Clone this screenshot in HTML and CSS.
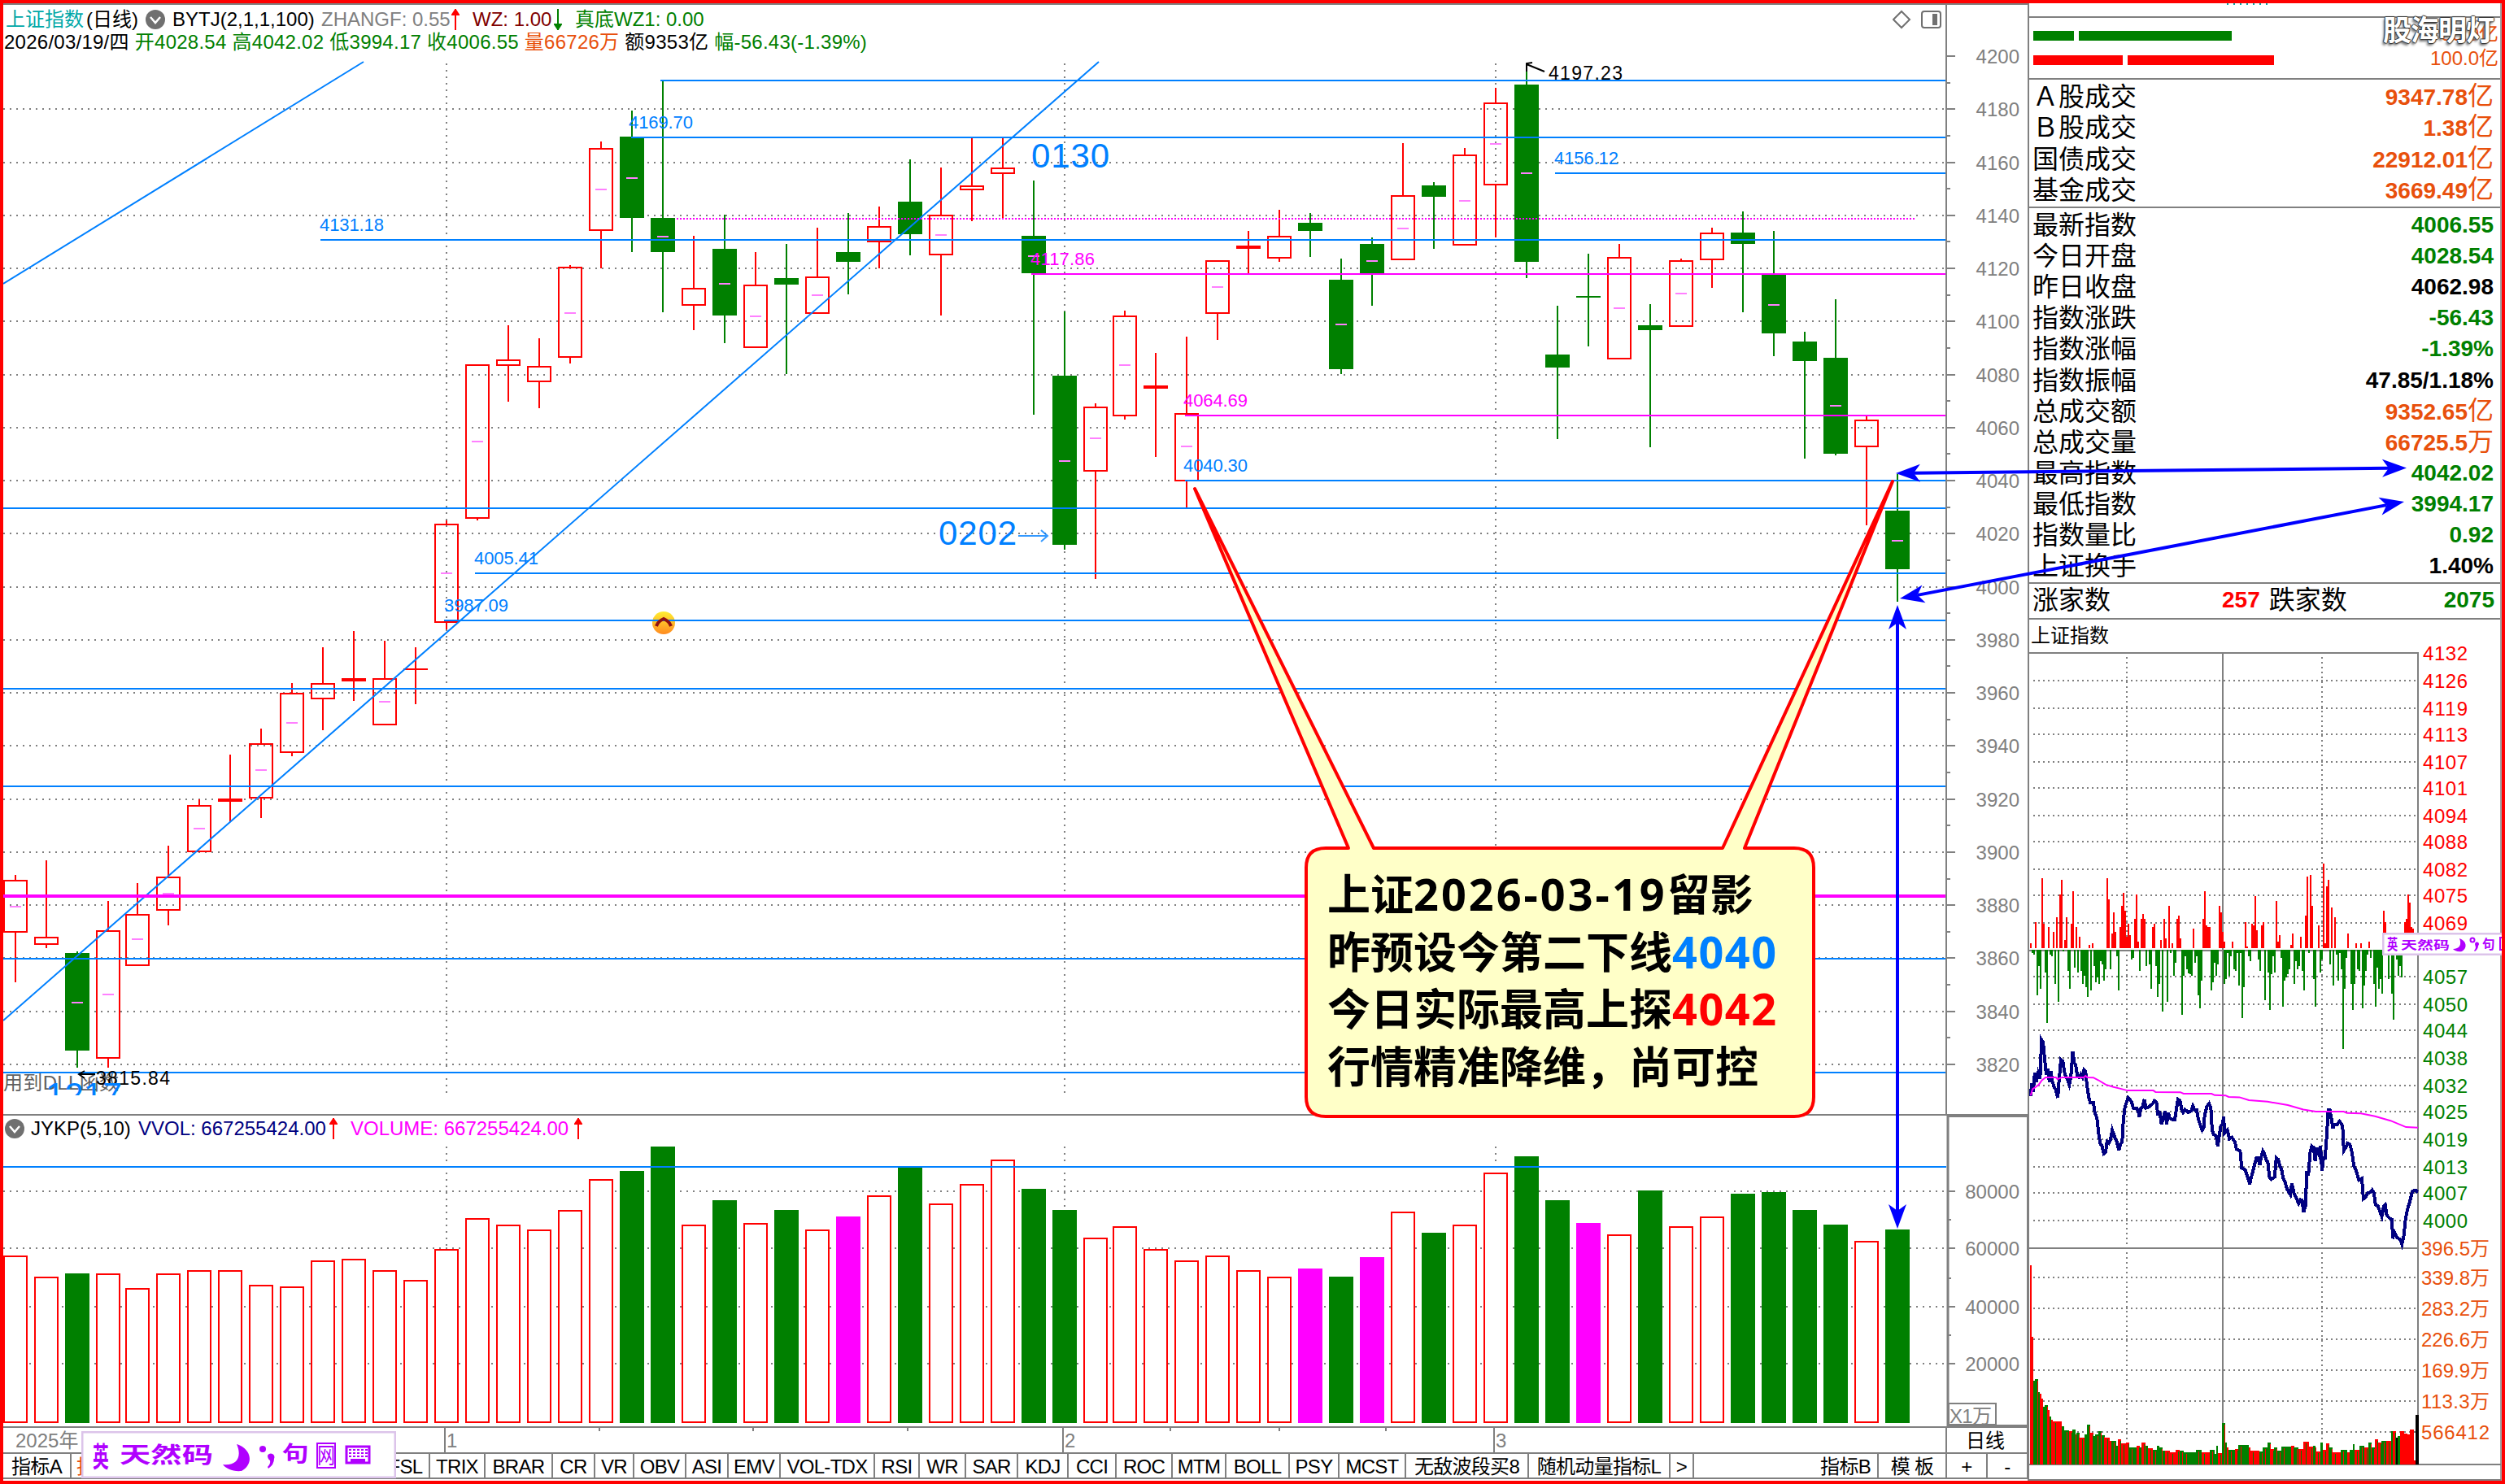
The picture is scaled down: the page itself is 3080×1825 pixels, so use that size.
FILE: index.html
```html
<!DOCTYPE html>
<html lang="zh-CN">
<head>
  <meta charset="UTF-8">
  <title>上证指数 日线</title>
  <link rel="stylesheet" href="styles.css">
</head>
<body>
  <div class="screen">

    <!-- K line area -->
    <div class="main">
      <div class="chart-head">
        <div class="head-row">
          <span class="cyan">上证指数</span><span class="period">(日线)</span>
          <svg class="drop" viewBox="0 0 24 24"><circle cx="12" cy="12" r="12"/><path d="M6 9l6 7 6-7"/></svg>
          <span class="ind-name">BYTJ(2,1,1,100)</span>
          <span class="grey zhangf">ZHANGF: 0.55</span>
          <svg class="flag up" viewBox="0 0 10 26"><path d="M5 0V26M1 7L5 1L9 7Z"/></svg>
          <span class="maroon wz">WZ: 1.00</span>
          <svg class="flag down" viewBox="0 0 10 26"><path d="M5 0V26M1 19L5 25L9 19Z"/></svg>
          <span class="green wz1">真底WZ1: 0.00</span>
          <svg class="tools" viewBox="0 0 60 24">
            <path d="M11 2L21 12L11 22L1 12Z"/>
            <rect x="36" y="2" width="23" height="20" rx="3"/>
            <rect class="solid" x="49" y="5" width="6" height="14"/>
          </svg>
        </div>
        <div class="head-row quote-row">
          <span>2026/03/19/四</span>
          <span class="green">开4028.54</span>
          <span class="green">高4042.02</span>
          <span class="green">低3994.17</span>
          <span class="green">收4006.55</span>
          <span class="orange">量66726万</span>
          <span>额9353亿</span>
          <span class="green">幅-56.43(-1.39%)</span>
        </div>
      </div>
      <svg class="price-chart" id="price" viewBox="4 72 2490 1299"></svg>
      <div class="vol-head">
        <svg class="drop" viewBox="0 0 24 24"><circle cx="12" cy="12" r="12"/><path d="M6 9l6 7 6-7"/></svg>
        <span class="vol-name">JYKP(5,10)</span>
        <span class="navy vvol">VVOL: 667255424.00</span>
        <svg class="flag up" viewBox="0 0 10 26"><path d="M5 0V26M1 7L5 1L9 7Z"/></svg>
        <span class="magenta volume">VOLUME: 667255424.00</span>
        <svg class="flag up" viewBox="0 0 10 26"><path d="M5 0V26M1 7L5 1L9 7Z"/></svg>
      </div>
      <svg class="vol-chart" id="volume" viewBox="4 1404 2490 383"></svg>
      <div class="tabs" id="tabs"></div>
    </div>

    <!-- Quote panel -->
    <div class="side">
      <div class="side-top"><i class="title-edge"></i></div>
      <div class="power">
        <div class="power-row">
          <i class="bar g" style="width:50px"></i><i class="bar g" style="width:188px"></i>
          <span class="orange">83.0亿</span>
        </div>
        <div class="power-row">
          <i class="bar r" style="width:110px"></i><i class="bar r" style="width:180px"></i>
          <span class="orange">100.0亿</span>
        </div>
      </div>
      <div class="quotes turnover">
        <div class="row"><span>Ａ股成交</span><b class="orange">9347.78<em>亿</em></b></div>
        <div class="row"><span>Ｂ股成交</span><b class="orange">1.38<em>亿</em></b></div>
        <div class="row"><span>国债成交</span><b class="orange">22912.01<em>亿</em></b></div>
        <div class="row"><span>基金成交</span><b class="orange">3669.49<em>亿</em></b></div>
      </div>
      <div class="quotes index">
        <div class="row"><span>最新指数</span><b class="green">4006.55</b></div>
        <div class="row"><span>今日开盘</span><b class="green">4028.54</b></div>
        <div class="row"><span>昨日收盘</span><b>4062.98</b></div>
        <div class="row"><span>指数涨跌</span><b class="green">-56.43</b></div>
        <div class="row"><span>指数涨幅</span><b class="green">-1.39%</b></div>
        <div class="row"><span>指数振幅</span><b>47.85/1.18%</b></div>
        <div class="row"><span>总成交额</span><b class="orange">9352.65<em>亿</em></b></div>
        <div class="row"><span>总成交量</span><b class="orange">66725.5<em>万</em></b></div>
        <div class="row"><span>最高指数</span><b class="green">4042.02</b></div>
        <div class="row"><span>最低指数</span><b class="green">3994.17</b></div>
        <div class="row"><span>指数量比</span><b class="green">0.92</b></div>
        <div class="row"><span>上证换手</span><b>1.40%</b></div>
      </div>
      <div class="updown">
        <span>涨家数</span><b class="red">257</b><span class="fall">跌家数</span><b class="green last">2075</b>
      </div>
      <div class="mini-title">上证指数</div>
      <svg class="mini" id="mini" viewBox="2495 803 581 1018"></svg>
    </div>

    <!-- Annotations drawn over the charts -->
    <svg class="overlay" viewBox="0 0 3080 1825" id="notes"></svg>
    <div class="note">
      <p>上证<i class="num date">2026-03-19</i>留影</p>
      <p>昨预设今第二下线<i class="num blue">4040</i></p>
      <p>今日实际最高上探<i class="num red">4042</i></p>
      <p>行情精准降维，尚可控</p>
    </div>
    <div class="watermark">股海明灯</div>

    <!-- Input method bars -->
    <svg class="ime" viewBox="0 0 387 58">
      <rect class="ime-box" x="1" y="1" width="385" height="56"/>
      <g id="ime-keys">
        <text class="ime-en" transform="translate(14 44) scale(.6 1.05)">英</text>
        <text class="ime-name" transform="translate(47 39) scale(1.42 1)">天然码</text>
        <path d="M191 16C210 22 212 41 197 49C186 50 178 46 174 41C191 43 198 32 191 16Z"/>
        <circle cx="223" cy="22" r="4"/>
        <path d="M229 30a4 4 0 1 1 8 4q0 7-7 12l-1-2q4-4 3-8q-3-2-3-6z"/>
        <text class="ime-ju" transform="translate(247 37) scale(1.05 .85)">句</text>
        <rect class="line" x="290" y="15" width="22" height="30"/>
        <text class="ime-net" transform="translate(290 40) scale(.82 1)">网</text>
        <rect class="line" x="326" y="19" width="28" height="20"/>
        <path class="dots" d="M329 23H352M329 27H352M329 31H352"/>
        <path d="M331 34h18v4h-18z"/>
      </g>
    </svg>
    <div class="ime-small">
      <svg viewBox="0 0 300 28" width="300" height="28">
        <rect class="ime-box" x="1" y="1" width="298" height="26"/>
        <text class="ime-en" transform="translate(6 21) scale(.4 .56)">英</text>
        <text class="ime-name" transform="translate(23 20) scale(.74 .5)">天然码</text>
        <path d="M95 7C104 10 105 19 98 23C93 24 89 22 87 20C95 20 98 15 95 7Z"/>
        <circle class="line" cx="111" cy="9" r="2.5"/>
        <path d="M114 14a2.500 2.500 0 1 1 4 2q0 4-4 7l-1-1q2-2 2-4z"/>
        <text class="ime-ju" transform="translate(123 20) scale(.5)">句</text>
        <rect class="line" x="145" y="6" width="16" height="15"/>
      </svg>
    </div>
  </div>
  <script src="charts.js"></script>
</body>
</html>
```

FILE: styles.css
```css
* {
  margin: 0;
  padding: 0;
  box-sizing: border-box;
}

body {
  width: 3080px;
  height: 1825px;
  background: #fff;
  color: #000;
  font-family: "Liberation Sans", "Noto Sans CJK SC", sans-serif;
  font-size: 24px;
  overflow: hidden;
}

.screen {
  position: relative;
  width: 3080px;
  height: 1825px;
  border: 4px solid #f00;
  display: grid;
  grid-template-columns: 2490px 582px;
  overflow: hidden;
}

.green { color: #008000; }
.red { color: #f00; }
.orange { color: #e8500c; }
.grey { color: #808080; }
.cyan { color: #00a8a8; }
.maroon { color: #800000; }
.navy { color: #000080; }
.magenta { color: #f0f; }
.blue { color: #0080ff; }

/* main column */
.main {
  display: flex;
  flex-direction: column;
  height: 1817px;
}

.chart-head {
  height: 68px;
  border-top: 2px solid #808080;
  padding-top: 4px;
}

.head-row {
  display: flex;
  align-items: center;
  height: 28px;
  line-height: 28px;
  white-space: nowrap;
  padding-left: 3px;
}

.quote-row {
  gap: 7px;
  padding-left: 1px;
  letter-spacing: 0.25px;
}

.period { margin-left: 3px; }
.drop { width: 24px; height: 24px; margin-left: 9px; }
.drop circle { fill: #707070; }
.drop path { fill: none; stroke: #fff; stroke-width: 2.5; }
.ind-name { width: 171px; margin-left: 9px; }
.zhangf { width: 156px; margin-left: 12px; }
.flag { width: 10px; height: 26px; margin-left: 4px; }
.flag path { stroke-width: 2; }
.flag.up path { stroke: #f00; fill: #f00; }
.flag.down path { stroke: #008000; fill: #008000; }
.wz { width: 96px; margin-left: 16px; }
.wz1 { margin-left: 16px; }

.tools { width: 60px; height: 24px; margin-left: auto; margin-right: 107px; }
.tools path, .tools rect { fill: none; stroke: #707070; stroke-width: 2; }
.tools .solid { fill: #707070; stroke: none; }

.price-chart {
  display: block;
  width: 2490px;
  height: 1299px;
  overflow: visible;
}

.vol-head {
  display: flex;
  align-items: center;
  height: 33px;
  line-height: 30px;
  white-space: nowrap;
}
.vol-head .drop { margin-left: 2px; }
.vol-name { width: 122px; margin-left: 8px; }
.vvol { width: 231px; margin-left: 10px; }
.volume { width: 271px; margin-left: 16px; }

.vol-chart {
  display: block;
  width: 2490px;
  height: 383px;
  overflow: visible;
}

svg text {
  font-family: "Liberation Sans", "Noto Sans CJK SC", sans-serif;
}

.tabs {
  display: flex;
  height: 33px;
  border-top: 2px solid #808080;
  border-bottom: 2px solid #808080;
  margin-top: -1px;
}

.tab {
  flex: none;
  height: 29px;
  line-height: 31px;
  text-align: center;
  white-space: nowrap;
  overflow: hidden;
  border-right: 2px solid #808080;
  letter-spacing: -0.7px;
}
.tab.right { text-align: right; padding-right: 8px; }
.tab.first { text-align: left; padding-left: 6px; }

/* side column */
.side {
  height: 1817px;
  border-left: 2px solid #808080;
  border-right: 2px solid #a0a0a0;
  margin-left: -1px;
  width: 583px;
}

.side-top {
  height: 18px;
  border-bottom: 2px solid #808080;
}

/* bottom edge of the scrolled-out title */
.title-edge {
  display: block;
  width: 50px;
  height: 2px;
  margin-left: 243px;
  background: repeating-linear-gradient(90deg, #00a8a8 0 2px, #fff 2px 8px);
}

.power {
  height: 76px;
  border-bottom: 2px solid #808080;
  padding: 7px 2px 0 5px;
}

.power-row {
  display: flex;
  align-items: center;
  gap: 6px;
  height: 30px;
}
.power-row span { margin-left: auto; line-height: 30px; padding-bottom: 5px; }
.bar { height: 12px; }
.bar.g { background: #008000; }
.bar.r { background: #f00; }

.quotes { border-bottom: 2px solid #808080; }
.turnover { height: 158px; padding-top: 2px; }
.index { height: 462px; padding-top: 2px; }

.row {
  display: flex;
  justify-content: space-between;
  align-items: center;
  height: 38px;
  line-height: 38px;
  padding: 0 8px 0 4px;
  font-size: 32px;
  white-space: nowrap;
}

.row b { font-size: 28px; }
.row em { font-size: 32px; font-style: normal; font-weight: 400; }
.turnover .row { height: 38.3px; }
.index .row { height: 38.1px; }

.updown {
  display: flex;
  align-items: center;
  height: 44px;
  line-height: 38px;
  border-bottom: 2px solid #808080;
  padding: 0 7px 3px 4px;
  font-size: 32px;
}
.updown b { font-size: 28px; }
.updown .red { margin-left: 137px; }
.updown .fall { margin-left: 11px; }
.updown .last { margin-left: auto; }

.mini-title {
  height: 41px;
  line-height: 40px;
  padding-left: 2px;
}

.mini {
  display: block;
  width: 581px;
  height: 1018px;
  overflow: visible;
}

/* things that lie over the charts */
.overlay {
  position: absolute;
  left: -4px;
  top: -4px;
  width: 3080px;
  height: 1825px;
}

.note {
  position: absolute;
  left: 1628px;
  top: 1058px;
  font: bold 53px/70px "Noto Sans CJK SC", sans-serif;
  white-space: nowrap;
}
.note p { height: 70.5px; }
.note .num {
  font-family: "Noto Sans", "Noto Sans CJK SC", sans-serif;
  font-style: normal;
  font-size: 54px;
  line-height: 1;
  letter-spacing: 1.5px;
}
.note .date { letter-spacing: 3px; }

.watermark {
  position: absolute;
  left: 2926px;
  top: 8px;
  font: bold 35px/46px "Noto Sans CJK SC", sans-serif;
  color: #fff;
  letter-spacing: -1px;
  text-shadow: -1px 0 1px #333, 1px 0 1px #333, 0 1px 1px #333, 0 -1px 1px #333, -2px 3px 3px #777;
}

.ime {
  position: absolute;
  left: 96px;
  top: 1756px;
  width: 387px;
  height: 58px;
}
.ime-small {
  position: absolute;
  left: 2925px;
  top: 1143px;
  width: 147px;
  height: 28px;
  overflow: hidden;
}
.ime, .ime-small svg { fill: #b000ff; }
.ime-box { fill: #fff; stroke: #dcc4ea; stroke-width: 3; }
.line { fill: none; stroke: #b000ff; stroke-width: 2; }
.dots { fill: none; stroke: #b000ff; stroke-width: 2; stroke-dasharray: 3 2; }
.ime-en { font-size: 33px; font-weight: bold; }
.ime-name { font-size: 27px; font-weight: bold; }
.ime-ju { font-size: 31px; font-weight: bold; }
.ime-net { font-size: 27px; }
#ime-keys rect.line:last-of-type { stroke-width: 3; }
```

FILE: charts.js
```js
const BLUE = '#0080ff', GREEN = '#008000', RED = '#f00', PINK = '#f0f', GREY = '#808080';

function line(x1, y1, x2, y2, color, w, dash) {
  return `<line x1="${x1}" y1="${y1}" x2="${x2}" y2="${y2}" stroke="${color}" stroke-width="${w || 2}"` +
    (dash ? ` stroke-dasharray="${dash}"` : '') + ' shape-rendering="crispEdges"/>';
}
function rect(x, y, w, h, fill, stroke) {
  if (stroke) {
    return `<rect x="${x + 1}" y="${y + 1}" width="${w - 2}" height="${Math.max(h - 2, 0.1)}" fill="${fill}" stroke="${stroke}" stroke-width="2" shape-rendering="crispEdges"/>`;
  }
  return `<rect x="${x}" y="${y}" width="${w}" height="${h}" fill="${fill}" shape-rendering="crispEdges"/>`;
}
function text(x, y, s, color, size, len, extra) {
  return `<text x="${x}" y="${y}" fill="${color}" font-size="${size || 22}"` +
    (len ? ` textLength="${len}"` : '') + ` ${extra || ''}>${s}</text>`;
}

// centre of the n-th day column
function dayX(i) {
  return 19 + 38 * i - (i >= 4 ? 2 : 0) - (i >= 36 ? 2 : 0);
}
function priceY(p) {
  return Math.round(69 + (4200 - p) * 3.263);
}

// colour, high, body top, body bottom, low, middle mark
const days = [
  ['r',1076,1082,1147,1208,1115],['r',1058,1152,1162,1166],['g',1170,1172,1292,1313,1233],['r',1108,1144,1302,1313,1223],
  ['r',1086,1124,1188,1188,1155],['r',1040,1078,1120,1138,1099],['r',983,990,1048,1048,1019],['r',928,982,986,1011],
  ['r',896,914,982,1006,947],['r',840,852,926,930,889],['r',796,840,860,898],['r',776,834,838,862],
  ['r',788,834,892,892,863],['r',796,822,824,866],['r',640,644,766,774,705],['r',448,448,638,640,543],
  ['r',400,442,450,494],['r',416,450,470,502],['r',326,328,440,447,385],['r',174,182,284,330,233],
  ['g',136,168,268,310,219],['g',99,268,310,384,291],['r',290,354,376,406],['g',264,306,388,422,349],
  ['r',310,350,428,428,389],['g',300,342,350,460],['r',280,340,386,386,363],['g',262,310,322,362],
  ['r',254,278,298,330],['g',196,248,288,314],['r',206,264,314,388,289],['r',170,228,234,272],
  ['r',170,206,214,269],['g',222,290,336,510,315],['g',383,462,670,676,567],['r',496,500,580,712,539],
  ['r',382,388,512,516,449],['r',434,474,478,562],['r',414,508,592,624,549],['r',320,320,386,418,353],
  ['r',284,302,306,336],['r',258,290,318,322],['g',262,274,284,316],['g',318,344,454,460,399],
  ['g',292,300,336,376,321],['r',176,240,320,320,281],['g',224,228,242,306],['r',182,190,302,302,247],
  ['r',108,126,228,292,177],['g',78,104,322,342,213],['g',376,436,452,540],['g',312,364,366,426],
  ['r',300,316,442,442,379],['g',374,400,406,550],['r',318,320,402,402,361],['r',280,286,320,354],
  ['g',260,286,300,384],['g',284,337,410,438,375],['g',408,420,444,564],['g',368,440,558,560,499],
  ['r',511,516,550,646],['g',583,628,700,740,665]
];

function drawPrice() {
  let s = '';
  for (let p = 4180; p >= 3820; p -= 20) s += line(4, priceY(p), 2393, priceY(p), GREY, 2, '2 6');
  [549, 1309, 1839].forEach(x => s += line(x, 78, x, 1344, GREY, 2, '2 6'));

  // price axis
  s += line(2393, 6, 2393, 1371, GREY) + line(4, 1371, 2494, 1371, GREY) + line(2393, 5, 2494, 5, GREY);
  for (let p = 4200; p >= 3820; p -= 10) {
    const y = priceY(p);
    s += line(2393, y, p % 20 ? 2398 : 2404, y, GREY);
    if (p % 20 === 0) s += text(2483, y + 9, p, GREY, 24, 0, 'text-anchor="end"');
  }

  s += `<clipPath id="low"><rect x="4" y="1319" width="400" height="28"/></clipPath>`;
  s += text(4, 1340, '用到DLL函数', '#606060', 24, 142);

  days.forEach((d, i) => {
    const x = dayX(i), c = d[0] === 'r' ? RED : GREEN;
    const hollow = d[0] === 'r' && d[3] - d[2] > 5;
    if (d[1] < d[2]) s += line(x, d[1], x, d[2], c);
    if (d[4] > d[3]) s += line(x, d[3], x, d[4], c);
    s += rect(x - 15, d[2], 30, d[3] - d[2], hollow ? 'none' : c, hollow ? c : '');
    if (d[5]) s += line(x - 7, d[5], x + 7, d[5], '#ff80ff');
  });

  s += `<path d="M4 349L447 76M4 1255L1351 76" stroke="${BLUE}" stroke-width="2" fill="none"/>`;
  [[812,99],[776,169],[394,295],[1912,213],[4,625],[584,705],[1457,591],[546,763],[4,847],[4,967],[4,1179],[4,1319]]
    .forEach(l => s += line(l[0], l[1], 2392, l[1], BLUE));
  s += line(1268, 337, 2392, 337, PINK) + line(1457, 511, 2392, 511, PINK);
  s += line(832, 269, 2354, 269, PINK, 2, '2 2') + line(4, 1102, 2392, 1102, PINK, 4);

  [[773,158,'4169.70'],[393,284,'4131.18'],[583,694,'4005.41'],[546,752,'3987.09'],[1911,202,'4156.12'],[1455,580,'4040.30']]
    .forEach(t => s += text(t[0], t[1], t[2], BLUE, 22, 79));
  s += text(1267, 326, '4117.86', PINK, 22, 79) + text(1455, 500, '4064.69', PINK, 22, 79);
  s += text(1268, 206, '0130', BLUE, 42, 96) + text(1154, 670, '0202', BLUE, 42, 96);
  s += `<path d="M1252 659H1288M1280 652L1288 659L1280 666" fill="none" stroke="${BLUE}" stroke-width="2" opacity=".8"/>`;
  s += text(1904, 98, '4197.23', '#000', 23, 91) + text(118, 1334, '3815.84', '#000', 23, 91);
  s += `<path d="M1899 88L1877 79M1877 88V78L1884 77M97 1321H117M104 1317L97 1321L104 1326" fill="none" stroke="#000" stroke-width="2"/>`;
  s += `<g clip-path="url(#low)">${text(56, 1361, '1217', BLUE, 42, 94)}</g>`;

  // event marker
  s += `<linearGradient id="sun" x2="0" y2="1"><stop stop-color="#ffee30"/><stop offset="1" stop-color="#ff8a20"/></linearGradient>
    <circle cx="816" cy="766" r="14" fill="url(#sun)"/>`;
  s += line(800, 763, 832, 763, BLUE);
  s += `<path d="M807 770q2-6 9-9q7 3 9 9" fill="none" stroke="#901010" stroke-width="4"/>`;
  document.getElementById('price').innerHTML = s;
}

const volumes = [
  1544,1570,1566,1566,1584,1566,1562,1562,1580,1582,1550,1548,1562,1574,1536,1498,1506,1512,1488,1450,1440,
  1410,1506,1476,1504,1488,1512,1496,1470,1436,1480,1456,1426,1462,1488,1522,1508,1536,1550,1544,1562,1570,
  1560,1570,1546,1490,1516,1506,1442,1422,1476,1504,1518,1464,1508,1496,1468,1466,1488,1506,1526,1512
];
const pinkDays = [27, 42, 44, 51];

function drawVolume() {
  let s = '';
  [1465, 1535, 1607, 1677].forEach((y, i) => {
    s += line(4, y, 2393, y, GREY, 2, '2 6');
    s += line(2395, y, 2404, y, GREY);
    if (i) s += line(2395, y - 35, 2399, y - 35, GREY);
    s += text(2483, y + 9, 80000 - i * 20000, GREY, 24, 0, 'text-anchor="end"');
  });
  [549, 1309, 1839].forEach(x => s += line(x, 1410, x, 1750, GREY, 2, '2 6'));
  volumes.forEach((y, i) => {
    const x = dayX(i) - 15;
    if (pinkDays.includes(i)) s += rect(x, y, 30, 1750 - y, PINK);
    else if (days[i][0] === 'g') s += rect(x, y, 30, 1750 - y, GREEN);
    else s += rect(x, y, 30, 1750 - y, '#fff', RED);
  });
  s += line(4, 1435, 2393, 1435, BLUE);

  s += `<path d="M2395 1372V1754M2395 1372.500H2494M2395 1753.500H2494" stroke="${GREY}" stroke-width="3" fill="none"/>`;
  s += line(2493, 1372, 2493, 1787, GREY, 2);
  s += rect(2395, 1725, 60, 28, '#fff', GREY) + text(2397, 1750, 'X1万', GREY, 24, 52);

  // date axis
  s += line(4, 1755, 2494, 1755, GREY) + line(2393, 1755, 2393, 1787, GREY);
  [547, 1307, 1837].forEach((x, i) => s += line(x, 1755, x, 1787, GREY) + text(x + 2, 1780, i + 1, GREY, 24));
  [737, 926, 1116, 1439, 1573, 1704].forEach(x => s += line(x, 1756, x, 1760, GREY));
  s += text(19, 1780, '2025年', GREY, 24) + text(2417, 1780, '日线', '#000', 24);
  document.getElementById('volume').innerHTML = s;
}

// label, right edge
const tabs = [
  ['指标A',88],['指标',198],['',262],['',346],['',404],['',470],['FSL',529],['TRIX',597],['BRAR',680],['CR',732],['VR',780],
  ['OBV',844],['ASI',896],['EMV',960],['VOL-TDX',1076],['RSI',1131],['WR',1188],['SAR',1252],['KDJ',1314],['CCI',1373],
  ['ROC',1442],['MTM',1508],['BOLL',1586],['PSY',1647],['MCST',1729],['无敌波段买8',1880],['随机动量指标L',2054],['&gt;',2083],
  ['指标B',2310],['模 板',2394],['+',2444],['-',2494]
];

function drawTabs() {
  let prev = 4;
  document.getElementById('tabs').innerHTML = tabs.map((t, i) => {
    const w = t[1] - prev;
    prev = t[1];
    const cls = i === 1 ? ' orange first' : t[0] === '指标B' ? ' right' : '';
    return `<div class="tab${cls}" style="width:${w}px">${t[0]}</div>`;
  }).join('');
}

// intraday strength bars: slot position and reach, 2.613 x 2.8 units per px
const ups = '44:1120 60:1047 81:896 86:1053 102:1064 117:1081 128:1030 138:952 143:902 154:1109 159:1030 175:1053 180:941 190:1064 201:1098 232:1126 243:1120 290:896 295:969 306:1086 311:1014 316:1081 332:1064 337:991 342:946 347:1008 352:1098 358:1053 363:1092 379:1036 384:952 389:1114 400:1036 405:1019 410:1036 436:1064 441:1053 462:1109 473:1036 478:1103 488:991 499:1120 514:1036 520:1025 525:1103 567:1070 598:1036 603:941 609:1058 614:1064 619:1064 650:991 655:1014 660:1081 666:1114 692:1114 734:1047 739:1131 755:1053 760:1058 765:958 770:1075 786:1058 791:1047 833:974 838:1114 844:1092 880:1126 885:1086 911:1098 927:1025 932:890 943:885 948:991 969:1058 985:846 990:1120 995:924 1001:902 1011:997 1021:1030 1063:1086 1089:1120 1105:1120 1131:1114 1178:1008 1183:1047 1246:1047 1251:1036 1256:952 1262:980 1267:1064 1272:1070';
const downs = '50:1153 55:1159 65:1299 70:1198 75:1277 91:1221 96:1394 107:1159 112:1165 122:1260 133:1322 149:1148 164:1215 170:1277 185:1204 196:1221 206:1215 211:1260 217:1232 222:1271 227:1305 238:1282 248:1198 253:1254 258:1238 264:1260 269:1182 274:1193 279:1249 284:1210 300:1210 321:1165 326:1282 368:1176 373:1170 394:1215 415:1198 426:1193 431:1277 447:1198 452:1305 457:1260 467:1355 483:1322 494:1153 504:1232 509:1187 530:1366 535:1232 541:1165 546:1210 551:1224 556:1226 561:1232 572:1187 577:1165 582:1299 588:1344 593:1249 624:1282 629:1254 635:1187 640:1232 645:1193 666:1260 671:1243 676:1153 682:1232 687:1165 697:1210 703:1215 708:1153 713:1266 718:1153 724:1378 729:1271 744:1165 750:1182 776:1176 781:1215 797:1316 807:1221 812:1350 817:1226 823:1165 828:1221 849:1170 854:1338 859:1249 865:1238 870:1226 875:1210 891:1260 896:1182 901:1210 906:1198 917:1215 922:1282 938:1153 953:1243 958:1338 974:1221 979:1176 1006:1193 1016:1266 1027:1159 1032:1249 1037:1154 1042:1210 1048:1484 1053:1277 1058:1170 1074:1260 1079:1350 1084:1260 1095:1210 1100:1215 1110:1344 1116:1266 1121:1215 1126:1159 1136:1170 1147:1260 1152:1338 1157:1204 1162:1277 1168:1243 1173:1294 1194:1243 1204:1294 1209:1384 1220:1176 1225:1232 1230:1198 1236:1238';

const minute = '44,245 47,200 52,230 57,165 62,195 68,165 74,185 79,52 84,60 89,120 94,170 99,150 104,195 109,160 114,195 120,215 124,220 131,250 135,190 141,120 147,125 152,160 157,180 162,185 168,205 173,180 179,92 184,130 189,140 194,175 200,180 205,170 210,180 215,155 220,160 225,210 231,250 235,265 245,265 250,300 257,320 262,370 267,405 273,415 279,440 285,435 289,400 295,405 300,395 306,360 311,375 316,390 321,400 327,430 332,410 338,400 342,320 347,280 352,265 357,250 363,255 368,265 374,285 384,285 389,295 393,315 398,285 404,280 409,255 414,285 425,280 436,270 441,260 448,265 453,310 458,295 464,340 470,320 476,295 481,340 486,300 491,320 500,325 507,325 512,290 517,255 524,260 529,290 534,300 540,290 550,300 560,295 565,278 570,290 577,290 582,320 588,340 595,360 600,350 603,310 610,280 617,270 623,285 627,360 632,375 640,380 645,415 650,380 655,345 660,340 664,315 667,370 676,360 682,390 690,385 700,400 705,425 717,432 722,490 733,495 741,520 748,545 753,520 758,500 764,475 769,455 775,455 780,480 785,450 790,432 795,440 800,460 806,470 811,520 817,528 828,520 833,455 839,460 844,480 850,495 855,525 862,540 867,560 878,580 883,542 890,575 896,590 905,610 911,598 916,600 921,640 927,620 931,500 936,515 942,435 947,415 953,420 958,465 964,420 970,440 975,415 980,500 985,455 990,455 995,385 1000,290 1005,290 1010,320 1015,355 1020,340 1030,340 1036,330 1046,345 1050,430 1056,420 1062,405 1070,410 1077,440 1082,480 1090,500 1098,530 1108,525 1113,595 1120,590 1126,575 1136,572 1141,565 1147,575 1152,615 1160,620 1165,635 1172,655 1178,620 1183,615 1188,650 1198,662 1205,665 1207,730 1213,710 1220,725 1232,735 1237,750 1243,720 1249,660 1255,630 1262,605 1270,570 1280,565 1288,572';
const average = '44,242 50,220 60,213 70,205 80,190 92,180 125,180 130,186 145,180 215,180 220,175 226,180 245,181 262,190 285,205 310,213 330,218 355,225 438,225 445,230 525,231 535,236 625,236 635,241 670,242 680,247 715,248 745,258 805,263 870,275 920,290 960,297 1050,297 1060,302 1105,303 1150,313 1200,328 1250,350 1288,352';

// minute volume: right edge of the run, top, colour
const turnover = '47,822,r 52,1066,r 57,1216,g 68,1210,g 73,1254,g 78,1260,r 83,1277,r 89,1304,g 99,1299,g 104,1315,r 109,1338,g 115,1350,r 145,1354,r 152,1370,g 168,1385,g 178,1388,r 187,1382,g 192,1398,r 202,1393,g 218,1410,r 225,1398,g 235,1365,g 245,1393,r 252,1404,g 262,1398,g 272,1388,g 282,1400,g 298,1410,r 304,1421,r 318,1421,g 324,1438,g 335,1415,r 350,1430,r 360,1427,r 384,1443,g 394,1438,r 400,1443,g 412,1427,r 420,1438,g 436,1445,r 450,1452,g 457,1438,g 468,1443,g 475,1454,g 490,1454,r 510,1460,r 522,1450,r 535,1454,g 575,1460,g 594,1450,g 620,1459,r 636,1450,g 640,1464,g 646,1438,g 659,1462,r 669,1360,g 674,1427,g 680,1443,r 700,1452,g 712,1449,r 745,1436,g 750,1443,r 780,1454,r 790,1458,g 805,1443,g 815,1427,g 825,1449,r 835,1443,g 850,1454,g 880,1441,g 890,1438,r 905,1443,g 920,1449,r 937,1424,r 950,1440,r 960,1438,g 975,1458,r 982,1427,g 992,1452,r 1003,1430,r 1015,1443,g 1040,1460,r 1060,1450,g 1070,1460,r 1078,1452,g 1085,1432,g 1100,1450,r 1115,1438,g 1130,1443,r 1140,1427,g 1150,1443,g 1160,1415,r 1172,1427,r 1187,1421,g 1202,1421,r 1207,1388,g 1217,1388,r 1222,1410,k 1232,1404,g 1245,1388,r 1255,1395,r 1261,1398,r 1275,1382,r 1281,1488,r 1290,1332,k';

function miniX(v) { return 2480 + v / 2.6133; }

function drawMini() {
  let s = '';
  const rows = [837,871,903,937,969,1003,1035,1069,1101,1135,1201,1235,1267,1301,1335,1367,1401,1435,1467,1501,1571,1609,1647,1685,1723,1761];
  rows.forEach(y => s += line(2500, y, 2973, y, GREY, 2, '2 4'));
  [2615, 2855].forEach(x => s += line(x, 808, x, 1801, GREY, 2, '2 4'));
  [803, 1169, 1535].forEach(y => s += line(2495, y, 2974, y, GREY));
  s += line(2495, 1801, 3075, 1801, GREY) + line(2495, 1820, 3075, 1820, GREY);
  s += line(2733, 803, 2733, 1801, GREY) + line(2973, 803, 2973, 1801, GREY);

  ups.split(' ').forEach(p => {
    const [x, v] = p.split(':'), y = 760 + v / 2.8;
    s += rect(Math.round(miniX(+x)) - 1, y, 2, 1166 - y, RED);
  });
  downs.split(' ').forEach(p => {
    const [x, v] = p.split(':'), y = 760 + v / 2.8;
    s += rect(Math.round(miniX(+x)) - 1, 1168, 2, y - 1168, GREEN);
  });

  let from = 42;
  turnover.split(' ').forEach(p => {
    const [to, v, c] = p.split(','), x = miniX(from), y = 1260 + v / 2.775;
    const col = { r: RED, g: GREEN, k: '#000' }[c];
    s += rect(x, y, (to - from) / 2.6133, 1801 - y, col);
    if (to - from > 9 && to < 1230) {
      s += rect(x + 3, y + 2, 1, 1799 - y, c === 'r' ? GREEN : RED);
    }
    from = +to;
  });

  const pts = str => str.split(' ').map(p => {
    const [x, y] = p.split(',');
    return miniX(+x).toFixed(1) + ',' + (1260 + y / 2.775).toFixed(1);
  }).join(' ');
  s += `<polyline points="${pts(minute)}" fill="none" stroke="#000080" stroke-width="4" shape-rendering="crispEdges"/>`;
  s += `<polyline points="${pts(average)}" fill="none" stroke="${PINK}" stroke-width="2"/>`;

  const marks = [4132,4126,4119,4113,4107,4101,4094,4088,4082,4075,4069,4063,4057,4050,4044,4038,4032,4025,4019,4013,4007,4000];
  const ys = [803].concat(rows.slice(0, 10), 1164, rows.slice(10, 20));
  marks.forEach((m, i) => s += text(2979, ys[i] + 9, m, i < 11 ? RED : GREEN, 24, 55));
  ['396.5万','339.8万','283.2万','226.6万','169.9万','113.3万','566412']
    .forEach((m, i) => s += text(2977, [1535].concat(rows.slice(20))[i] + 9, m, '#e8500c', 24, 84));
  document.getElementById('mini').innerHTML = s;
}

// double headed arrow
function arrow(x1, y1, x2, y2) {
  const a = Math.atan2(y2 - y1, x2 - x1), deg = a * 180 / Math.PI;
  const dx = Math.cos(a) * 22, dy = Math.sin(a) * 22;
  const head = 'M0 0L-30 -11L-22 0L-30 11Z';
  return `<line x1="${x1 + dx}" y1="${y1 + dy}" x2="${x2 - dx}" y2="${y2 - dy}" stroke="#00f" stroke-width="4"/>
    <path d="${head}" fill="#00f" transform="translate(${x2} ${y2}) rotate(${deg})"/>
    <path d="${head}" fill="#00f" transform="translate(${x1} ${y1}) rotate(${deg + 180})"/>`;
}

function drawNotes() {
  document.getElementById('notes').innerHTML =
    `<path d="M1630 1043H1658L1469 601L1689 1043H2118L2327 592L2145 1043H2206Q2230 1043 2230 1067V1349Q2230 1373 2206 1373H1630Q1606 1373 1606 1349V1067Q1606 1043 1630 1043Z" fill="#ffffc8" stroke="#f00" stroke-width="4" stroke-linejoin="round"/>` +
    arrow(2331, 582, 2959, 575.5) + arrow(2336, 736, 2956, 617) + arrow(2333, 744, 2333, 1511);
}

drawPrice();
drawVolume();
drawTabs();
drawMini();
drawNotes();
```
